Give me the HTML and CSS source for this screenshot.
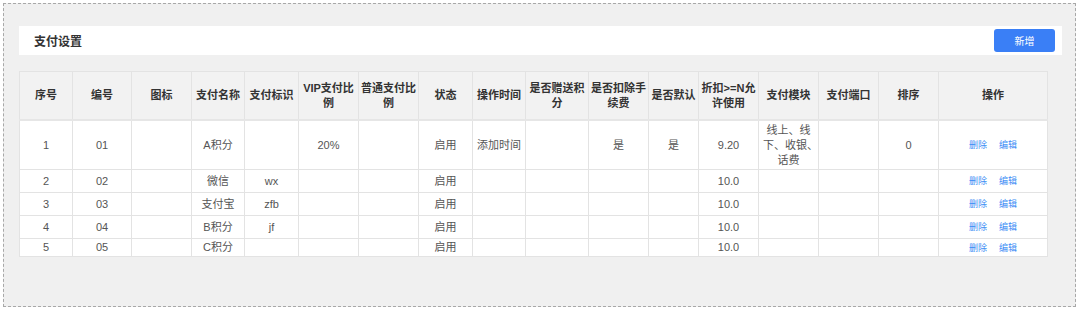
FILE: index.html
```html
<!DOCTYPE html>
<html lang="zh-CN">
<head>
    <meta charset="UTF-8">
    <meta name="viewport" content="width=device-width, initial-scale=1.0">
    <title>支付设置</title>
    <link rel="stylesheet" href="styles.css">
</head>
<body>
    <div class="page">
        <div class="toolbar">
            <span class="title">支付设置</span>
            <button class="btn-add">新增</button>
        </div>
        <table class="pay-table">
            <colgroup>
                <col style="width:53px"><col style="width:59px"><col style="width:60px"><col style="width:53px">
                <col style="width:54px"><col style="width:60px"><col style="width:60px"><col style="width:54px">
                <col style="width:53px"><col style="width:63px"><col style="width:60px"><col style="width:50px">
                <col style="width:60px"><col style="width:60px"><col style="width:60px"><col style="width:60px">
                <col style="width:109px">
            </colgroup>
            <thead>
                <tr>
                    <th>序号</th>
                    <th>编号</th>
                    <th>图标</th>
                    <th>支付名称</th>
                    <th>支付标识</th>
                    <th>VIP支付比例</th>
                    <th>普通支付比例</th>
                    <th>状态</th>
                    <th>操作时间</th>
                    <th>是否赠送积分</th>
                    <th>是否扣除手续费</th>
                    <th>是否默认</th>
                    <th>折扣&gt;=N允许使用</th>
                    <th>支付模块</th>
                    <th>支付端口</th>
                    <th>排序</th>
                    <th>操作</th>
                </tr>
            </thead>
            <tbody>
                <tr class="tall">
                    <td>1</td><td>01</td><td></td><td>A积分</td><td></td><td>20%</td><td></td>
                    <td>启用</td><td class="left">添加时间</td><td></td><td>是</td><td>是</td><td>9.20</td>
                    <td>线上、线<br>下、收银、<br>话费</td><td></td><td>0</td>
                    <td><a href="#">删除</a><a href="#">编辑</a></td>
                </tr>
                <tr>
                    <td>2</td><td>02</td><td></td><td>微信</td><td>wx</td><td></td><td></td>
                    <td>启用</td><td></td><td></td><td></td><td></td><td>10.0</td>
                    <td></td><td></td><td></td>
                    <td><a href="#">删除</a><a href="#">编辑</a></td>
                </tr>
                <tr>
                    <td>3</td><td>03</td><td></td><td>支付宝</td><td>zfb</td><td></td><td></td>
                    <td>启用</td><td></td><td></td><td></td><td></td><td>10.0</td>
                    <td></td><td></td><td></td>
                    <td><a href="#">删除</a><a href="#">编辑</a></td>
                </tr>
                <tr>
                    <td>4</td><td>04</td><td></td><td>B积分</td><td>jf</td><td></td><td></td>
                    <td>启用</td><td></td><td></td><td></td><td></td><td>10.0</td>
                    <td></td><td></td><td></td>
                    <td><a href="#">删除</a><a href="#">编辑</a></td>
                </tr>
                <tr class="short">
                    <td>5</td><td>05</td><td></td><td>C积分</td><td></td><td></td><td></td>
                    <td>启用</td><td></td><td></td><td></td><td></td><td>10.0</td>
                    <td></td><td></td><td></td>
                    <td><a href="#">删除</a><a href="#">编辑</a></td>
                </tr>
            </tbody>
        </table>
    </div>
</body>
</html>
```

FILE: styles.css
```css
body {
    margin: 0;
    background-color: #fff;
    font-family: "Liberation Sans", "Noto Sans CJK SC", sans-serif;
}
.page {
    margin: 3px 0 0 3px;
    width: 1073px;
    height: 304px;
    box-sizing: border-box;
    border: 1px dashed #a8a8a8;
    background-color: #f0f0f0;
    padding: 22px 0 0 15px;
}
.toolbar {
    width: 1043px;
    height: 29px;
    background-color: #fff;
    display: flex;
    align-items: center;
    justify-content: space-between;
    padding: 0 7px 0 15px;
    box-sizing: border-box;
}
.title {
    font-size: 12px;
    font-weight: bold;
    color: #333;
}
.btn-add {
    width: 61px;
    height: 23px;
    border: none;
    border-radius: 3px;
    background-color: #3a7ff6;
    color: #fff;
    font-family: inherit;
    font-size: 10px;
    padding: 0;
}
.pay-table {
    margin-top: 16px;
    width: 1028px;
    table-layout: fixed;
    border-collapse: collapse;
    background-color: #fff;
    font-size: 11px;
    line-height: 15px;
    color: #555;
}
.pay-table th,
.pay-table td {
    border: 1px solid #e3e3e3;
    text-align: center;
    vertical-align: middle;
    padding: 0 2px;
}
.pay-table th {
    background-color: #f2f2f2;
    color: #333;
    font-weight: bold;
    height: 47px;
    border-bottom: 2px solid #e6e6e6;
}
.pay-table td {
    height: 22px;
    padding: 0 4px;
    white-space: nowrap; /* 保持原图的换行位置 */
}
.pay-table td.left {
    text-align: left;
}
.pay-table tr.tall td {
    height: 48px;
}
.pay-table tr.short td {
    height: 17px;
}
.pay-table a {
    color: #3b8cf5;
    font-size: 9px;
    text-decoration: none;
    margin: 0 6px;
}
```
